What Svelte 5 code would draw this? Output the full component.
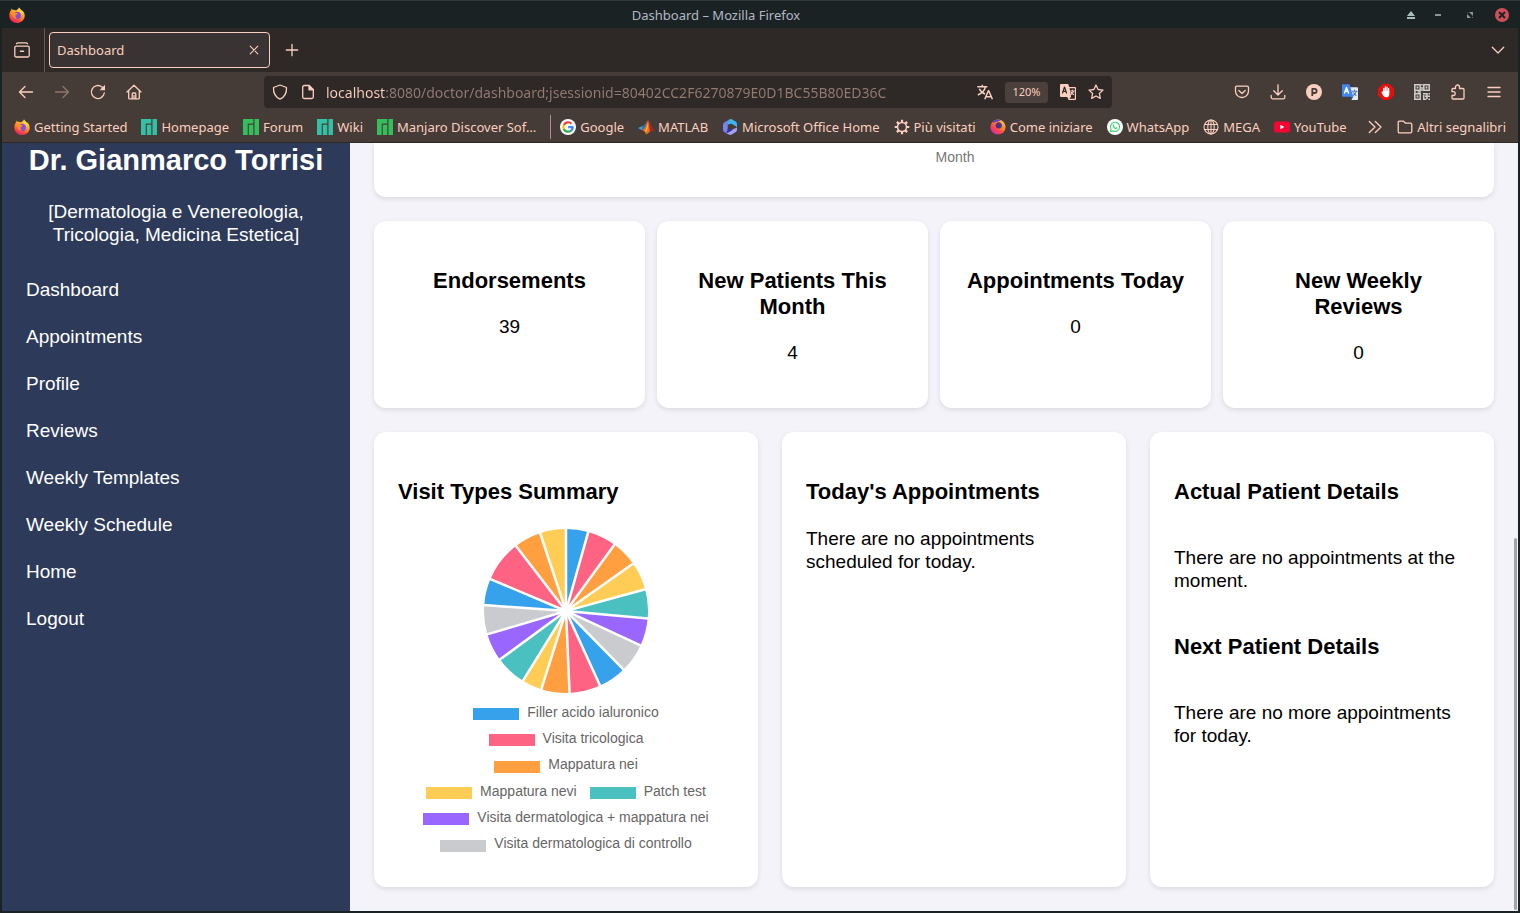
<script>
  const colors = {
    blue: '#36a2eb', pink: '#ff6384', orange: '#ff9f40', yellow: '#ffcd56',
    teal: '#4bc0c0', purple: '#9966ff', grey: '#c9cbcf'
  };
  const cycle = Object.values(colors);
  const edges = [0, 15.7, 36.2, 54.7, 74.7, 95.3, 114.8, 135.5, 155.5, 177.5, 197.5, 211.7, 233.7, 253.5, 274.2, 292.9, 322.4, 341.6, 360];
  const point = (deg) => {
    const a = (deg * Math.PI) / 180;
    return `${(82 + 82 * Math.sin(a)).toFixed(2)} ${(82 - 82 * Math.cos(a)).toFixed(2)}`;
  };
  const slices = edges.slice(0, -1).map((start, i) => ({
    d: `M82 82L${point(start)}A82 82 0 0 1 ${point(edges[i + 1])}Z`,
    edge: `M82 82L${point(start)}`,
    fill: cycle[i % cycle.length]
  }));

  const legend = [
    [['Filler acido ialuronico', colors.blue]],
    [['Visita tricologica', colors.pink]],
    [['Mappatura nei', colors.orange]],
    [['Mappatura nevi', colors.yellow], ['Patch test', colors.teal]],
    [['Visita dermatologica + mappatura nei', colors.purple]],
    [['Visita dermatologica di controllo', colors.grey]]
  ];

  const menu = ['Dashboard', 'Appointments', 'Profile', 'Reviews', 'Weekly Templates', 'Weekly Schedule', 'Home', 'Logout'];

  const stats = [
    ['Endorsements', 39],
    ['New Patients This Month', 4],
    ['Appointments Today', 0],
    ['New Weekly Reviews', 0]
  ];

  const bookmarks = [
    ['Getting Started', 'firefox'],
    ['Homepage', 'manjaro'],
    ['Forum', 'manjaroGreen'],
    ['Wiki', 'manjaro'],
    ['Manjaro Discover Sof…', 'manjaroGreen'],
    null,
    ['Google', 'google'],
    ['MATLAB', 'matlab'],
    ['Microsoft Office Home', 'office'],
    ['Più visitati', 'gear'],
    ['Come iniziare', 'firefoxOld'],
    ['WhatsApp', 'whatsapp'],
    ['MEGA', 'globe'],
    ['YouTube', 'youtube']
  ];

  const leftTools = [['Back', 'back'], ['Forward', 'forward'], ['Reload', 'reload'], ['Home', 'home']];
  const rightTools = [
    ['Pocket', 'pocket'], ['Downloads', 'download'], ['Account', 'account'], ['Translate', 'gtranslate'],
    ['AdBlock', 'adblock'], ['QR code', 'qr'], ['Extensions', 'puzzle'], ['Menu', 'menu']
  ];
</script>

{#snippet icon(name)}
  <svg class="icon" class:dim={name === 'forward'} viewBox="0 0 16 16" width="16" height="16" fill="none" stroke="currentColor" stroke-width="1.3" stroke-linecap="round" stroke-linejoin="round" aria-hidden="true">
    {#if name === 'firefox'}
      <defs>
        <linearGradient id="fx" x1="0.8" y1="0" x2="0.3" y2="1">
          <stop offset="0" stop-color="#fff44f" /><stop offset="0.35" stop-color="#ffb02e" /><stop offset="0.65" stop-color="#ff6a2b" /><stop offset="1" stop-color="#f5156c" />
        </linearGradient>
      </defs>
      <g stroke="none">
        <path fill="url(#fx)" d="M10 .2c.7 1.3 1.6 2 2.400 2.900 1.300.4 3.100 2.700 3.300 5.100.3 4.200-3.200 7.700-7.500 7.700C3.600 15.900.3 12.600.3 8.400.3 6 1.100 4.200 2.200 3l.2-1.400 1.500 1.300c1.300-.2 2.200.100 3 .6C8 2.900 9.400 2 10 .2z" />
        <circle cx="8.200" cy="8.400" r="3.700" fill="#8a4cd8" />
        <path fill="#ff9024" d="M1.400 6.200c1.200-1.200 3-1.700 4.700-.8 1 .2 1.800.6 2.600 1.100-.3 1-1.300 1.100-2.200 1.700-.4 1.600.4 2.600 1.800 2.900-2.500 1-4.600-.6-4.800-2.900z" />
        <path fill="#ffd83f" d="M10.300 2.500c2.100 1.400 3 3.600 2.500 6-.2-1.600-1.100-2.800-2.300-3.500-1-.8-1-1.700-.2-2.500z" />
      </g>
    {:else if name === 'firefoxOld'}
      <defs>
        <linearGradient id="fo" x1="1" y1="0" x2="0.2" y2="1">
          <stop offset="0" stop-color="#ffe14a" /><stop offset="0.4" stop-color="#ff8a2a" /><stop offset="0.75" stop-color="#fa3c58" /><stop offset="1" stop-color="#c52be0" />
        </linearGradient>
      </defs>
      <g stroke="none">
        <circle cx="8" cy="8" r="7.600" fill="url(#fo)" />
        <path fill="#6a3fc4" d="M3 2.400C5.500.3 9 0 11 1.600c-1.500.2-2.800.7-3.600 1.500-1.900-.2-3 .2-4.400 1.300z" />
        <circle cx="8.600" cy="6.600" r="3" fill="#46337f" />
        <path fill="#5a3a98" d="M7.500 3.500c2-.6 4 .6 4.300 2.600.2 2-1 3.400-2.800 3.500 1.300-1 1.500-2.600.7-4z" />
      </g>
    {:else if name === 'manjaro' || name === 'manjaroGreen'}
      <g stroke="none">
        <path fill={name === 'manjaro' ? '#35bfa4' : '#35bf5c'} d="M0 0h10.300v4.500H4.700V16H0zM5.800 5.700h4.500V16H5.800zM11.500 0H16v16h-4.500z" />
      </g>
    {:else if name === 'google'}
      <circle cx="8" cy="8" r="8" fill="#fff" stroke="none" />
      <g stroke-width="2.200" stroke-linecap="butt">
        <path stroke="#ea4335" d="M3.800 5.900a4.700 4.700 0 0 1 7.600-1.200" /><path stroke="#fbbc05" d="M3.900 10.200a4.700 4.700 0 0 1 0-4.500" />
        <path stroke="#34a853" d="M11.200 11.500a4.700 4.700 0 0 1-7.400-1.500" /><path stroke="#4285f4" d="M8.200 8.200h4.500c0 1.400-.5 2.500-1.600 3.400" />
      </g>
    {:else if name === 'matlab'}
      <g stroke="none">
        <path fill="#3f9fd4" d="M0 9l4.500-2 2 2.300L4 11.200z" /><path fill="#2672a8" d="M4.500 7C6.800 6.300 7.500 3.500 9.300 1.600L7.300 9 4 11.200z" />
        <path fill="#f36a21" d="M10 1c1.800 2.500 3.400 8 6 11.300-2.500-1-4-.2-5.500 1.700L8 15.500c-.7-2.300-1.800-3.800-4-4.300C7.500 9.600 8.500 4 10 1z" />
        <path fill="#a8201f" d="M10 1c1.800 2.500 3.400 8 6 11.300-2-.9-2.800-.7-4 .3C11.600 9 11 4.500 10 1z" /><path fill="#ffc247" d="M9.700 3.500c.4 3.500.2 7-1.700 9.800l-1-1.600c1.600-2 2.300-5 2.700-8.200z" />
      </g>
    {:else if name === 'office'}
      <g stroke="none">
        <path fill="#7a83ee" d="M7.800.3L2.700 3.200C1.500 4 1 4.800 1 6v4.500c0 1.500.7 2.200 1.700 2.800L5.500 15c-1-2 .2-3.200.2-5V6.300c0-2.200.3-4.500 2.100-6z" />
        <path fill="#39b8f2" d="M7.800.3c1-.5 1.700-.2 2.500.3l3.200 2C14.700 3.400 15 4 15 5.500v4c0-1.200-.6-1.800-1.600-2.400l-3-1.800c-1.700-1-3-.3-4.700.6 0-2.500.3-4.200 2.100-5.600z" />
        <path fill="#a4a1fa" d="M15 8.500v2c0 1.300-.5 2.100-1.600 2.800L9.800 15.400c-1.200.7-2.200.6-3.400-.1l-3.700-2c2 .7 3.700 0 5-1l3.100-1.900c1.800-1 3-1.300 4.200-1.900z" />
        <path fill="#3c2fa5" d="M5.700 9.500v1.200c-.2 1.700-1.200 2.500-3 2.600 2 .9 3.700.3 5-.6l2.500-1.500-3-1.500z" />
      </g>
    {:else if name === 'gear'}
      <circle cx="8" cy="8" r="4.500" stroke-width="1.500" />
      <path stroke-width="2.200" stroke-linecap="butt" d="M8 .7v2.800M8 12.500v2.800M.7 8h2.800M12.500 8h2.800M2.900 2.900l2 2M11.100 11.100l2 2M2.900 13.100l2-2M11.100 4.900l2-2" />
    {:else if name === 'whatsapp'}
      <circle cx="8" cy="8" r="8" fill="#fff" stroke="none" />
      <path stroke="#3bd672" stroke-width="1.100" d="M3.400 12.600l.7-2.400a4.600 4.600 0 1 1 1.800 1.700z" />
      <path fill="#3bd672" stroke="none" d="M6.300 5.500c.6-.3.9.5 1 1 .1.300-.4.600-.3.800.4.700.9 1.100 1.600 1.400.3.100.5-.6.900-.5.500.2 1.200.5 1 .9-.3 1-1.300 1.200-2.200.8C6.900 9.300 6 8.300 5.700 7.200c-.2-.8 0-1.400.6-1.700z" />
    {:else if name === 'globe'}
      <g stroke-width="1.100"><circle cx="8" cy="8" r="7" /><ellipse cx="8" cy="8" rx="3.200" ry="7" /><path d="M8 1v14M1.500 5.500h13M1.500 10.500h13" /></g>
    {:else if name === 'youtube'}
      <rect x="0" y="2.500" width="16" height="11" rx="2.500" fill="#ff0033" stroke="none" /><path fill="#fff" stroke="none" d="M6.300 5.700v4.600L10.400 8z" />
    {:else if name === 'back'}
      <path d="M14.500 8h-13M7 2.500L1.500 8 7 13.500" />
    {:else if name === 'forward'}
      <path d="M1.500 8h13M9 2.500L14.500 8 9 13.500" />
    {:else if name === 'reload'}
      <path d="M14.300 9A6.500 6.500 0 1 1 12 3l1 .9" /><path fill="currentColor" stroke="none" d="M15 .8v5.400H9.600z" />
    {:else if name === 'home'}
      <path d="M1 8l7-6.800L15 8M2.700 6.700v7.200c0 .6.300.9.900.9h8.800c.6 0 .9-.3.900-.9V6.700M6.200 14.500V10c0-.6.300-1 .9-1h1.800c.6 0 .9.400.9 1v4.500M8 11.500v3" />
    {:else if name === 'shield'}
      <path d="M8 1L1.500 3.500c-.3 5.500 2 9.500 6.500 11.700 4.500-2.200 6.800-6.200 6.500-11.700z" />
    {:else if name === 'page'}
      <path d="M9 1.500H4.200c-.9 0-1.500.6-1.500 1.500v10c0 .9.600 1.500 1.500 1.500h7.600c.9 0 1.500-.6 1.500-1.500V5.800z" /><path fill="currentColor" d="M9 1.500v4.300h4.300z" />
    {:else if name === 'translate'}
      <path stroke-width="1.500" stroke-linecap="butt" d="M.3 2.700h10M5.300.7v2M8.500 2.700C7.800 6 4.500 9.500.8 11M2.300 4.700C3.400 7.300 5.400 8.900 8 10M7.800 15.300l3.500-8.600h.4l3.700 8.600M9 12.700h5" />
    {:else if name === 'tabTranslate'}
      <g stroke="none"><path fill="currentColor" d="M1 0h7.200l1 3H15a1 1 0 0 1 1 1v11a1 1 0 0 1-1 1H8.500l-1.200-3H1a1 1 0 0 1-1-1V1a1 1 0 0 1 1-1z" /><path fill="#2e2826" d="M9.600 4.200h5.200v10.600H9.300l1.800-2z" /></g>
      <path stroke="#2e2826" stroke-width="1.200" d="M2.500 9l2-6 2 6M3.200 7.300h2.700" /><path stroke-width="1.100" d="M10.500 7h3.700M12.400 6v1M13.500 7c-.4 1.700-1.300 2.700-2.500 3.500M11.300 8.500l2.200 2.200" />
    {:else if name === 'star'}
      <path d="M8 1l2.100 4.500 4.900.6-3.600 3.400.9 4.900L8 12l-4.300 2.400.9-4.900L1 6.100l4.900-.6z" />
    {:else if name === 'pocket'}
      <path d="M3 2.200h10c1 0 1.500.5 1.500 1.500V7A6.500 6.500 0 0 1 1.500 7V3.700c0-1 .5-1.500 1.500-1.500zM4.800 6.500L8 9.500l3.200-3" />
    {:else if name === 'download'}
      <path d="M8 .8v10M3.700 6.700L8 11l4.300-4.300M1.200 11.500v1.800c0 .9.500 1.500 1.400 1.500h10.800c.9 0 1.400-.6 1.400-1.500v-1.800" />
    {:else if name === 'account'}
      <circle cx="8" cy="8" r="8" fill="currentColor" stroke="none" /><path stroke="#463c37" stroke-width="1.800" stroke-linecap="butt" d="M6.300 12V4.800h2.200a2 2 0 0 1 0 4.200H6.300" />
    {:else if name === 'gtranslate'}
      <g stroke="none"><path fill="#e4e9f4" d="M7 3.300h8a1 1 0 0 1 1 1v10.600a1 1 0 0 1-1 1H9.500z" /><path fill="#4285f4" d="M1 .2h6.500l3.800 12.600H1a1 1 0 0 1-1-1V1.200a1 1 0 0 1 1-1z" /><path fill="#254a9c" d="M7.700 12.800h3.600L9.200 16z" /></g>
      <path stroke="#fff" stroke-width="1.400" d="M2.500 9l2-5.500 2 5.500M3.200 7.300h2.700" /><path stroke="#5478bd" stroke-width="1.100" d="M10.300 7.200H15M12.500 6v1.200M14.200 7.300c-.4 2-1.300 3-2.700 4M11.300 8.500l2.700 3" />
    {:else if name === 'adblock'}
      <path fill="#e5100d" stroke="none" d="M4.700 0h6.600L16 4.700v6.600L11.300 16H4.700L0 11.300V4.700z" />
      <g stroke="#fff" stroke-width="1.300"><path d="M5.800 8V4.300M7.400 8V3M9 8V3.200M10.600 8V4.600" /><path fill="#fff" d="M5.700 7.500h5v2.200c0 2-1 3-2.700 3-1.300 0-2.200-.9-3.300-3.200l-.5-1.200z" /></g>
    {:else if name === 'qr'}
      <g stroke="#d0cdca" stroke-width="1.500" stroke-linecap="butt" stroke-linejoin="miter"><path d="M.8.8h5.400v5.400H.8zM9.800.8h5.400v5.400H9.800zM.8 9.800h5.400v5.400H.8zM9 9.700h3.500M9.700 11v5M11 12.300h5M13 9v6M10 15.200h2.500M14.500 15.200H16M14.500 9.700H16M8 0v1.500M8 3v4M0 8h2M3.500 8H7" /><path d="M2.600 3.500h1.800M11.600 3.500h1.800M2.600 12.500h1.800" stroke-width="1.800" /></g>
    {:else if name === 'puzzle'}
      <path d="M5.500 4.500V3a2 2 0 0 1 4 0v1.500h3.500c.7 0 1 .4 1 1V14c0 .6-.3 1-1 1H3c-.6 0-1-.4-1-1v-2.500h1.300a1.900 1.900 0 0 0 0-3.800H2V5.500c0-.6.4-1 1-1z" />
    {:else if name === 'menu'}
      <path d="M2 3.500h12M2 8h12M2 12.500h12" />
    {:else if name === 'archive'}
      <path d="M2.500 1.700C3 1 3.500.9 4.200.9h7.600c.7 0 1.200.1 1.700.8M2.300 4.200h11.400c1 0 1.500.5 1.500 1.500v7.800c0 1-.5 1.500-1.500 1.500H2.300c-1 0-1.500-.5-1.500-1.500V5.700c0-1 .5-1.500 1.500-1.500z" /><path stroke-width="1.600" d="M6.500 9.200h3" />
    {:else if name === 'close'}
      <path stroke-width="1.100" d="M4.200 4.200l7.600 7.600M11.800 4.200l-7.600 7.600" />
    {:else if name === 'plus'}
      <path d="M8 2.300v11.400M2.300 8h11.400" />
    {:else if name === 'chevron'}
      <path d="M2.300 5.300L8 11l5.700-5.700" />
    {:else if name === 'more'}
      <path d="M2.300 2.500L8 8l-5.700 5.500M8.300 2.500L14 8l-5.700 5.500" />
    {:else if name === 'folder'}
      <path d="M2.500 2.200h4l2 2h5c.9 0 1.300.4 1.300 1.300v7c0 .9-.4 1.300-1.300 1.300h-11c-.9 0-1.300-.4-1.300-1.300v-9c0-.9.400-1.300 1.300-1.300z" />
    {:else if name === 'eject'}
      <g fill="#a9c0ba" stroke="none"><path d="M8 4l4 5H4zM4 10h8v2H4z" /></g>
    {:else if name === 'minimize'}
      <path fill="#8a9696" stroke="none" d="M5 7h6v2H5z" />
    {:else if name === 'restore'}
      <path fill="#8a9696" stroke="none" d="M7 5h4v4zM5 7v4h4zM5 5.500h1L5 6.500zM11 9.800V11H9.800z" />
    {:else if name === 'windowClose'}
      <circle cx="8" cy="8" r="7" fill="#cf4f58" stroke="none" /><path stroke="#1b2224" stroke-width="2" stroke-linecap="butt" d="M5 5l6 6M11 5l-6 6" />
    {/if}
  </svg>
{/snippet}

<div class="window">
  <header class="titlebar">
    {@render icon('firefox')}
    <span class="window-title">Dashboard – Mozilla Firefox</span>
    <div class="window-buttons">
      <button aria-label="Keep above">{@render icon('eject')}</button>
      <button aria-label="Minimize">{@render icon('minimize')}</button>
      <button aria-label="Restore">{@render icon('restore')}</button>
      <button aria-label="Close window">{@render icon('windowClose')}</button>
    </div>
  </header>

  <div class="tabs">
    <button class="view" aria-label="Firefox View">{@render icon('archive')}</button>
    <div class="tab">
      <button class="tab-name">Dashboard</button>
      <button class="tab-close" aria-label="Close tab">{@render icon('close')}</button>
    </div>
    <button class="tool" aria-label="New tab">{@render icon('plus')}</button>
    <button class="tool all-tabs" aria-label="List all tabs">{@render icon('chevron')}</button>
  </div>

  <nav class="toolbar" aria-label="Navigation">
    {#each leftTools as [label, name]}
      <button class="tool" aria-label={label}>{@render icon(name)}</button>
    {/each}
    <div class="spring"></div>
    <div class="urlbar">
      {@render icon('shield')}
      {@render icon('page')}
      <input aria-label="Address" value="localhost:8080/doctor/dashboard;jsessionid=80402CC2F6270879E0D1BC55B80ED36C" />
      <button aria-label="Translate page">{@render icon('translate')}</button>
      <button class="zoom">120%</button>
      <button aria-label="Translation extension">{@render icon('tabTranslate')}</button>
      <button aria-label="Bookmark this page">{@render icon('star')}</button>
    </div>
    <div class="spring"></div>
    {#each rightTools as [label, name]}
      <button class="tool" aria-label={label}>{@render icon(name)}</button>
    {/each}
  </nav>

  <nav class="bookmarks" aria-label="Bookmarks">
    {#each bookmarks as item}
      {#if item}
        <a href="#bookmark">{@render icon(item[1])}{item[0]}</a>
      {:else}
        <span class="divider"></span>
      {/if}
    {/each}
    <button class="overflow" aria-label="More bookmarks">{@render icon('more')}</button>
    <a href="#bookmark">{@render icon('folder')}Altri segnalibri</a>
  </nav>

  <div class="page">
    <aside>
      <h1>Dr. Gianmarco Torrisi</h1>
      <p>[Dermatologia e Venereologia, Tricologia, Medicina Estetica]</p>
      <nav aria-label="Doctor menu">
        {#each menu as entry}
          <a href="#section">{entry}</a>
        {/each}
      </nav>
    </aside>

    <main>
      <section class="card chart-end">Month</section>

      <div class="stats">
        {#each stats as [title, value]}
          <section class="card">
            <h2>{title}</h2>
            <p>{value}</p>
          </section>
        {/each}
      </div>

      <div class="details">
        <section class="card">
          <h2>Visit Types Summary</h2>
          <svg class="pie" viewBox="0 0 164 164" width="164" height="164" role="img" aria-label="Visit types">
            {#each slices as slice}
              <path d={slice.d} fill={slice.fill} />
            {/each}
            {#each slices as slice}
              <path d={slice.edge} stroke="#fff" stroke-width="2.500" stroke-linecap="square" />
            {/each}
            <circle cx="82" cy="82" r="6" fill="#fff" />
          </svg>
          <div class="legend">
            {#each legend as row}
              <div class="legend-row">
                {#each row as [label, color]}
                  <span class="key"><i style:background={color}></i>{label}</span>
                {/each}
              </div>
            {/each}
          </div>
        </section>
        <section class="card">
          <h2>Today's Appointments</h2>
          <p>There are no appointments scheduled for today.</p>
        </section>
        <section class="card patients">
          <h2>Actual Patient Details</h2>
          <p>There are no appointments at the moment.</p>
          <h2>Next Patient Details</h2>
          <p>There are no more appointments for today.</p>
        </section>
      </div>
      <div class="scroll-thumb"></div>
    </main>
  </div>
</div>

<style>
  :global(body) { margin: 0; background: #1b2224; }
  .window {
    box-sizing: border-box;
    min-height: 100vh;
    display: flex;
    flex-direction: column;
    padding: 0 2px 2px;
    background: #1b2224;
    color: #fbcfbf;
    font: 13px/18px "Noto Sans", sans-serif;
  }
  button, input {
    font: inherit;
    color: inherit;
    background: none;
    border: 0;
    padding: 0;
    margin: 0;
  }
  button { display: flex; align-items: center; justify-content: center; }
  a { color: inherit; text-decoration: none; }
  .icon { display: block; flex: none; }
  .dim { opacity: .4; }

  .titlebar {
    display: flex;
    align-items: center;
    height: 27px;
    margin: 0 -2px;
    padding: 0 10px 0 9px;
    border-top: 1px solid #2f393b;
    color: #b3b9c3;
  }
  .window-title { flex: 1; padding-left: 20px; text-align: center; }
  .window-buttons { display: flex; align-items: center; }
  .window-buttons button { margin-left: 16px; }
  .window-buttons button:nth-child(2) { margin-left: 11px; }

  .tabs { display: flex; align-items: center; height: 44px; background: #2e2826; }
  .view { width: 43px; height: 44px; padding-right: 2px; border-right: 1px solid #675851; box-sizing: border-box; }
  .tab {
    box-sizing: border-box;
    display: flex;
    align-items: center;
    width: 221px;
    height: 36px;
    margin: 0 4px;
    padding: 0 7px;
    border: 1px solid #fbcfbf;
    border-radius: 4px;
    background: #3a3334;
  }
  .tab-name { flex: 1; justify-content: flex-start; }
  .tool { width: 36px; height: 36px; flex: none; }
  .all-tabs { margin-left: auto; margin-right: 2px; }

  .toolbar { display: flex; align-items: center; height: 40px; padding: 0 6px; background: #463c37; }
  .spring { flex: 112 1 0; }
  .urlbar {
    flex: 832 1 0;
    min-width: 0;
    box-sizing: border-box;
    display: flex;
    align-items: center;
    gap: 12px;
    height: 32px;
    padding: 0 8px;
    border-radius: 4px;
    background: #2e2826;
  }
  .urlbar input {
    flex: 1;
    min-width: 0;
    font-size: 14px;
    height: 24px;
    margin-left: -2px;
    outline: 0;
    color: transparent;
    background: linear-gradient(90deg, #fbcfbf 59px, #937b72 59px);
    -webkit-background-clip: text;
    background-clip: text;
  }
  .zoom { width: 43px; height: 21px; border-radius: 3px; background: #4b403b; font-size: 11px; }

  .bookmarks {
    display: flex;
    align-items: center;
    gap: 14px;
    height: 30px;
    padding: 0 12px;
    background: #463c37;
    border-bottom: 1px solid #2e2826;
    white-space: nowrap;
  }
  .bookmarks a { display: flex; align-items: center; gap: 4px; }
  .divider { width: 1px; height: 24px; background: #b08f83; margin-right: -5px; }
  .overflow { margin-left: auto; }

  .page {
    flex: 1;
    display: flex;
    background: #f4f3f9;
    color: #000;
    font: 19px/23px "Liberation Sans", Arial, sans-serif;
  }
  aside { width: 348px; flex: none; background: #2d3a5a; color: #fff; text-align: center; }
  h1 { margin: 0; font-size: 29px; line-height: 34px; }
  aside p { margin: 23px 24px 20px; }
  aside a { display: block; padding: 12px 24px; text-align: left; }

  main { position: relative; flex: 1; min-width: 0; padding: 0 24px 24px; }
  .card {
    min-width: 0;
    background: #fff;
    border-radius: 12px;
    padding: 24px;
    box-shadow: 0 2px 5px rgba(0, 0, 0, .1);
  }
  .card.chart-end {
    padding: 4px 24px 30px 66px;
    border-radius: 0 0 12px 12px;
    text-align: center;
    color: #777;
    font-size: 14px;
    line-height: 20px;
  }
  h2 { margin: 23px 0 22px; font-size: 22px; line-height: 26px; }
  .card p { margin: 0 0 20px; }
  .stats { display: grid; grid-template-columns: repeat(4, 1fr); gap: 12px; margin: 24px 0; text-align: center; }
  .stats .card { padding: 24px 26px; }
  .stats h2 { margin-bottom: 21px; }
  .details { display: grid; grid-template-columns: 48fr 43fr 43fr; gap: 24px; }
  .pie { display: block; margin: 24px auto 6px; }
  .legend { display: grid; grid-auto-rows: 1fr; height: 158px; margin-bottom: 6px; color: #666; font-size: 14px; }
  .legend-row { display: flex; justify-content: center; align-items: center; gap: 13px; }
  .key { display: flex; align-items: center; gap: 8px; white-space: nowrap; }
  .key i { width: 46px; height: 12px; margin-top: 4px; }
  .patients p { margin-bottom: 42px; }
  .patients h2 { margin-bottom: 41px; }
  .patients p:last-child { margin-bottom: 0; }
  .scroll-thumb { position: absolute; right: 1px; bottom: 1px; width: 3px; height: 372px; border-radius: 2px; background: #a3a3a8; }
</style>
